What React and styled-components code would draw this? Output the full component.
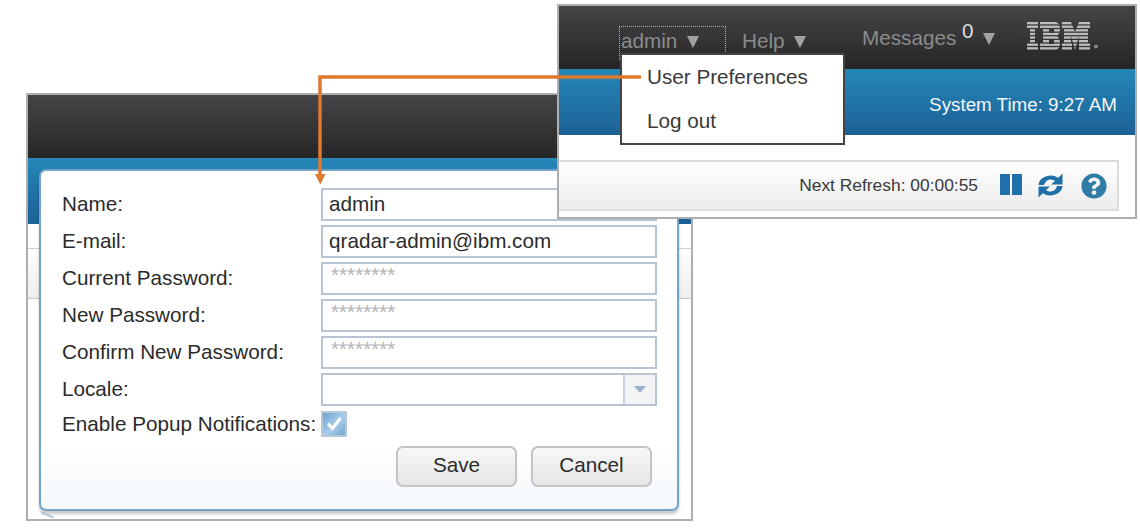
import React from "react";
import styled, { createGlobalStyle } from "styled-components";
import { FaQuestionCircle } from "react-icons/fa";

const fields = [
  { label: "Name:", value: "admin" },
  { label: "E-mail:", value: "qradar-admin@ibm.com" },
  { label: "Current Password:", hint: "********" },
  { label: "New Password:", hint: "********" },
  { label: "Confirm New Password:", hint: "********" },
];

function IbmLogo() {
  const stripes = [0, 1, 2, 3, 4, 5, 6, 7];
  return (
    <svg width="73" height="28" viewBox="0 0 73 28">
      <defs>
        <clipPath id="ibm-letters">
          <path d="M0 0h11v7H8v14h3v7H0v-7h3V7H0z" />
          <path
            clipRule="evenodd"
            d="M13 0h15c3 0 5 3 5 7 0 3-1 5-3 7 2 2 3 4 3 7 0 4-2 7-5 7H13v-7h3V7h-3zM22 6v5h4c1.500 0 1.500-5 0-5zM22 17v5h4c1.500 0 1.500-5 0-5z"
          />
          <path d="M35 0h9l4 10 4-10h11v7h-2v14h2v7H52V14l-4 14-4-14v7h1v7H35v-7h2V7h-2z" />
        </clipPath>
      </defs>
      <g clipPath="url(#ibm-letters)" fill="#bdbdbd">
        {stripes.map((n) => (
          <rect key={n} x="0" y={n * 3.6} width="64" height="2.300" />
        ))}
      </g>
      <circle cx="69" cy="24.500" r="2" fill="#8a8a8a" />
    </svg>
  );
}

function RefreshIcon() {
  const arrow =
    "M0.500 12C1 6 7 2.500 13 2.500c3 0 5.500 1 7 2.500l4.500-4.500V11.500H13l4-3.500C15.500 7 14 6.500 12 6.500 9 6.500 7 9 6 12z";
  return (
    <svg width="25" height="25" viewBox="0 0 25 25">
      <path d={arrow} fill="#1f70a8" />
      <path d={arrow} fill="#1f70a8" transform="rotate(180 12.500 12.500)" />
    </svg>
  );
}

export default function App() {
  return (
    <Canvas>
      <GlobalStyle />

      <ProfileWindow>
        <DarkBar />
        <BlueBar />
        <WindowBody>
          <BackdropRow />
        </WindowBody>

        <Dialog>
          {fields.map((f) => (
            <FormRow key={f.label}>
              <RowLabel>{f.label}</RowLabel>
              <Field>
                {f.value}
                {f.hint && <Hint>{f.hint}</Hint>}
              </Field>
            </FormRow>
          ))}
          <FormRow>
            <RowLabel>Locale:</RowLabel>
            <Field>
              <SelectButton>
                <SelectArrow />
              </SelectButton>
            </Field>
          </FormRow>
          <CheckRow>
            <Label>Enable Popup Notifications:</Label>
            <CheckBox>
              <svg width="18" height="18" viewBox="0 0 18 18">
                <path d="M3 8.500l4.500 5L15.500 3" fill="none" stroke="#fff" strokeWidth="3" />
              </svg>
            </CheckBox>
          </CheckRow>
          <Buttons>
            <Button>Save</Button>
            <Button>Cancel</Button>
          </Buttons>
        </Dialog>
        <DialogEcho />
      </ProfileWindow>

      <MainWindow>
        <DarkBar $nav>
          <NavAdmin>
            admin <Caret />
          </NavAdmin>
          <NavItem $w="120px" $top="23px">
            Help <Caret />
          </NavItem>
          <NavItem $w="165px" $top="20px">
            Messages <Count>0</Count> <Caret />
          </NavItem>
          <LogoSlot>
            <IbmLogo />
          </LogoSlot>
        </DarkBar>
        <BlueBar>
          <SystemTime>System Time: 9:27 AM</SystemTime>
        </BlueBar>
        <WindowBody $pad>
          <RefreshBar>
            <RefreshText>Next Refresh: 00:00:55</RefreshText>
            <PauseIcon>
              <i />
              <i />
            </PauseIcon>
            <RefreshIcon />
            <HelpIcon>
              <FaQuestionCircle size={26} color="#2f7da6" />
            </HelpIcon>
          </RefreshBar>
        </WindowBody>

        <Menu>
          <MenuItem>User Preferences</MenuItem>
          <MenuItem>Log out</MenuItem>
        </Menu>
      </MainWindow>

      <Callout width="1140" height="528" viewBox="0 0 1140 528">
        <path d="M641 77H320v98" fill="none" stroke="#de7a2e" strokeWidth="3.500" />
        <path d="M315 174h10.500L320.250 184.500z" fill="#de7a2e" />
      </Callout>
    </Canvas>
  );
}

const GlobalStyle = createGlobalStyle`
  html, body {
    margin: 0;
    background: #fff;
  }
  body {
    font-family: "Liberation Sans", Arial, sans-serif;
  }
`;

const Canvas = styled.div`
  position: relative;
  width: 1140px;
  height: 528px;
  overflow: hidden;
  background: #fff;
`;

const Window = styled.div`
  position: absolute;
  box-sizing: border-box;
  display: flex;
  flex-direction: column;
  border: 2px solid #aeaeae;
  background: #fff;
`;

const ProfileWindow = styled(Window)`
  left: 26px;
  top: 93px;
  width: 667px;
  height: 428px;
`;

const MainWindow = styled(Window)`
  left: 557px;
  top: 4px;
  width: 580px;
  height: 215px;
`;

const DarkBar = styled.div`
  flex: none;
  height: 63px;
  display: flex;
  align-items: flex-start;
  padding-left: ${(p) => (p.$nav ? "60px" : "0")};
  background: linear-gradient(180deg, #454547 0%, #262526 100%);
`;

const BlueBar = styled.div`
  flex: none;
  box-sizing: border-box;
  height: 66px;
  display: flex;
  align-items: center;
  justify-content: flex-end;
  padding-top: 6px;
  background: linear-gradient(180deg, #2487b8 0%, #1d6196 100%);
`;

const WindowBody = styled.div`
  flex: 1;
  min-height: 0;
  padding: ${(p) => (p.$pad ? "25px 16px 7px 0" : "24px 0 0")};
`;

const BackdropRow = styled.div`
  height: 51px;
  box-sizing: border-box;
  border-top: 1px solid #d0d0d0;
  border-bottom: 1px solid #c8c8c8;
  background: linear-gradient(180deg, #fff 0%, #eeeeee 100%);
`;

const Dialog = styled.div`
  position: absolute;
  left: 11px;
  top: 74px;
  width: 640px;
  height: 342px;
  box-sizing: border-box;
  display: flex;
  flex-direction: column;
  gap: 4px;
  padding: 17px 20px 0 21px;
  border: 2px solid #73a3cb;
  border-radius: 7px;
  background: linear-gradient(180deg, #fff 0%, #fff 80%, #f4f8fc 100%);
  box-shadow: 0 3px 3px rgba(0, 0, 0, 0.22);
`;

const DialogEcho = styled.div`
  position: absolute;
  left: 13px;
  bottom: 3px;
  width: 13px;
  border-top: 2px solid #a9c3da;
  transform: rotate(22deg);
`;

const FormRow = styled.div`
  display: flex;
  align-items: center;
  height: 33px;
`;

const Label = styled.div`
  flex: none;
  width: 259px;
  font-size: 20.700px;
  color: #2b2b2b;
  white-space: nowrap;
`;

const RowLabel = styled(Label)`
  padding-bottom: 2px;
`;

const Field = styled.div`
  position: relative;
  box-sizing: border-box;
  width: 336px;
  height: 33px;
  padding: 0 6px;
  border: 2px solid #b8c4d4;
  background: #fff;
  font-size: 20.700px;
  line-height: 28px;
  color: #2b2b2b;
`;

const Hint = styled.span`
  display: block;
  padding-left: 2px;
  line-height: 22px;
  color: #b4b4b4;
`;

const SelectButton = styled.div`
  position: absolute;
  top: 0;
  right: 0;
  bottom: 0;
  width: 32px;
  box-sizing: border-box;
  display: flex;
  align-items: center;
  justify-content: center;
  border-left: 2px solid #c8d1dd;
  background: #f2f3f5;
`;

const SelectArrow = styled.span`
  width: 0;
  height: 0;
  border-left: 6px solid transparent;
  border-right: 6px solid transparent;
  border-top: 7px solid #9fb0d0;
`;

const CheckRow = styled.div`
  display: flex;
  align-items: center;
  height: 26px;
  margin-top: 1px;
`;

const CheckBox = styled.div`
  box-sizing: border-box;
  width: 26px;
  height: 26px;
  display: flex;
  align-items: center;
  justify-content: center;
  border: 2px solid #b8c8da;
  background: linear-gradient(135deg, #6ea6d4 0%, #a9cde9 55%, #6fa7d3 100%);
`;

const Buttons = styled.div`
  display: flex;
  justify-content: flex-end;
  gap: 14px;
  margin-top: 5px;
  padding-right: 5px;
`;

const Button = styled.div`
  box-sizing: border-box;
  width: 121px;
  height: 41px;
  display: flex;
  align-items: center;
  justify-content: center;
  padding-bottom: 3px;
  border: 2px solid #c4c4c4;
  border-radius: 7px;
  background: linear-gradient(180deg, #f8f8f8 0%, #e6e6e6 100%);
  font-size: 20.700px;
  color: #2b2b2b;
`;

const NavItem = styled.div`
  flex: none;
  width: ${(p) => p.$w};
  margin-top: ${(p) => p.$top};
  font-size: 20.700px;
  color: #8c8c8c;
  white-space: nowrap;
`;

const NavAdmin = styled(NavItem)`
  box-sizing: border-box;
  width: 107px;
  height: 34px;
  margin-top: 20px;
  margin-right: 16px;
  padding: 2px 0 0 1px;
  border: 1px dotted #b0b0b0;
  border-bottom: none;
`;

const Caret = styled.span`
  display: inline-block;
  margin-left: 4px;
  width: 0;
  height: 0;
  border-left: 6.500px solid transparent;
  border-right: 6.500px solid transparent;
  border-top: 12px solid #a2a2a2;
`;

const Count = styled.span`
  vertical-align: 7px;
  line-height: 0;
  color: #dcdcdc;
`;

const LogoSlot = styled.div`
  flex: none;
  margin-top: 16px;
`;

const SystemTime = styled.div`
  margin-right: 18px;
  font-size: 18.800px;
  color: #f2f7fb;
`;

const RefreshBar = styled.div`
  box-sizing: border-box;
  height: 51px;
  display: flex;
  align-items: center;
  justify-content: flex-end;
  gap: 16px;
  padding-right: 10px;
  border: 2px solid #dcdcdc;
  border-left: none;
  background: linear-gradient(180deg, #fff 0%, #ececec 100%);
`;

const RefreshText = styled.div`
  margin-right: 6px;
  font-size: 17.400px;
  color: #3a3a3a;
`;

const PauseIcon = styled.div`
  display: flex;
  gap: 2px;
  margin-bottom: 2px;
  i {
    display: block;
    width: 10px;
    height: 21px;
    background: #1f70a8;
  }
`;

const HelpIcon = styled.div`
  display: flex;
  margin-left: 2px;
`;

const Menu = styled.div`
  position: absolute;
  left: 61px;
  top: 47px;
  width: 225px;
  height: 92px;
  box-sizing: border-box;
  display: flex;
  flex-direction: column;
  padding: 1px 0 0 25px;
  border: 2px solid #444;
  background: #fff;
`;

const MenuItem = styled.div`
  height: 44px;
  line-height: 42px;
  font-size: 20.700px;
  color: #3a3a3a;
  & + & {
    padding-top: 1px;
  }
`;

const Callout = styled.svg`
  position: absolute;
  left: 0;
  top: 0;
  pointer-events: none;
`;
